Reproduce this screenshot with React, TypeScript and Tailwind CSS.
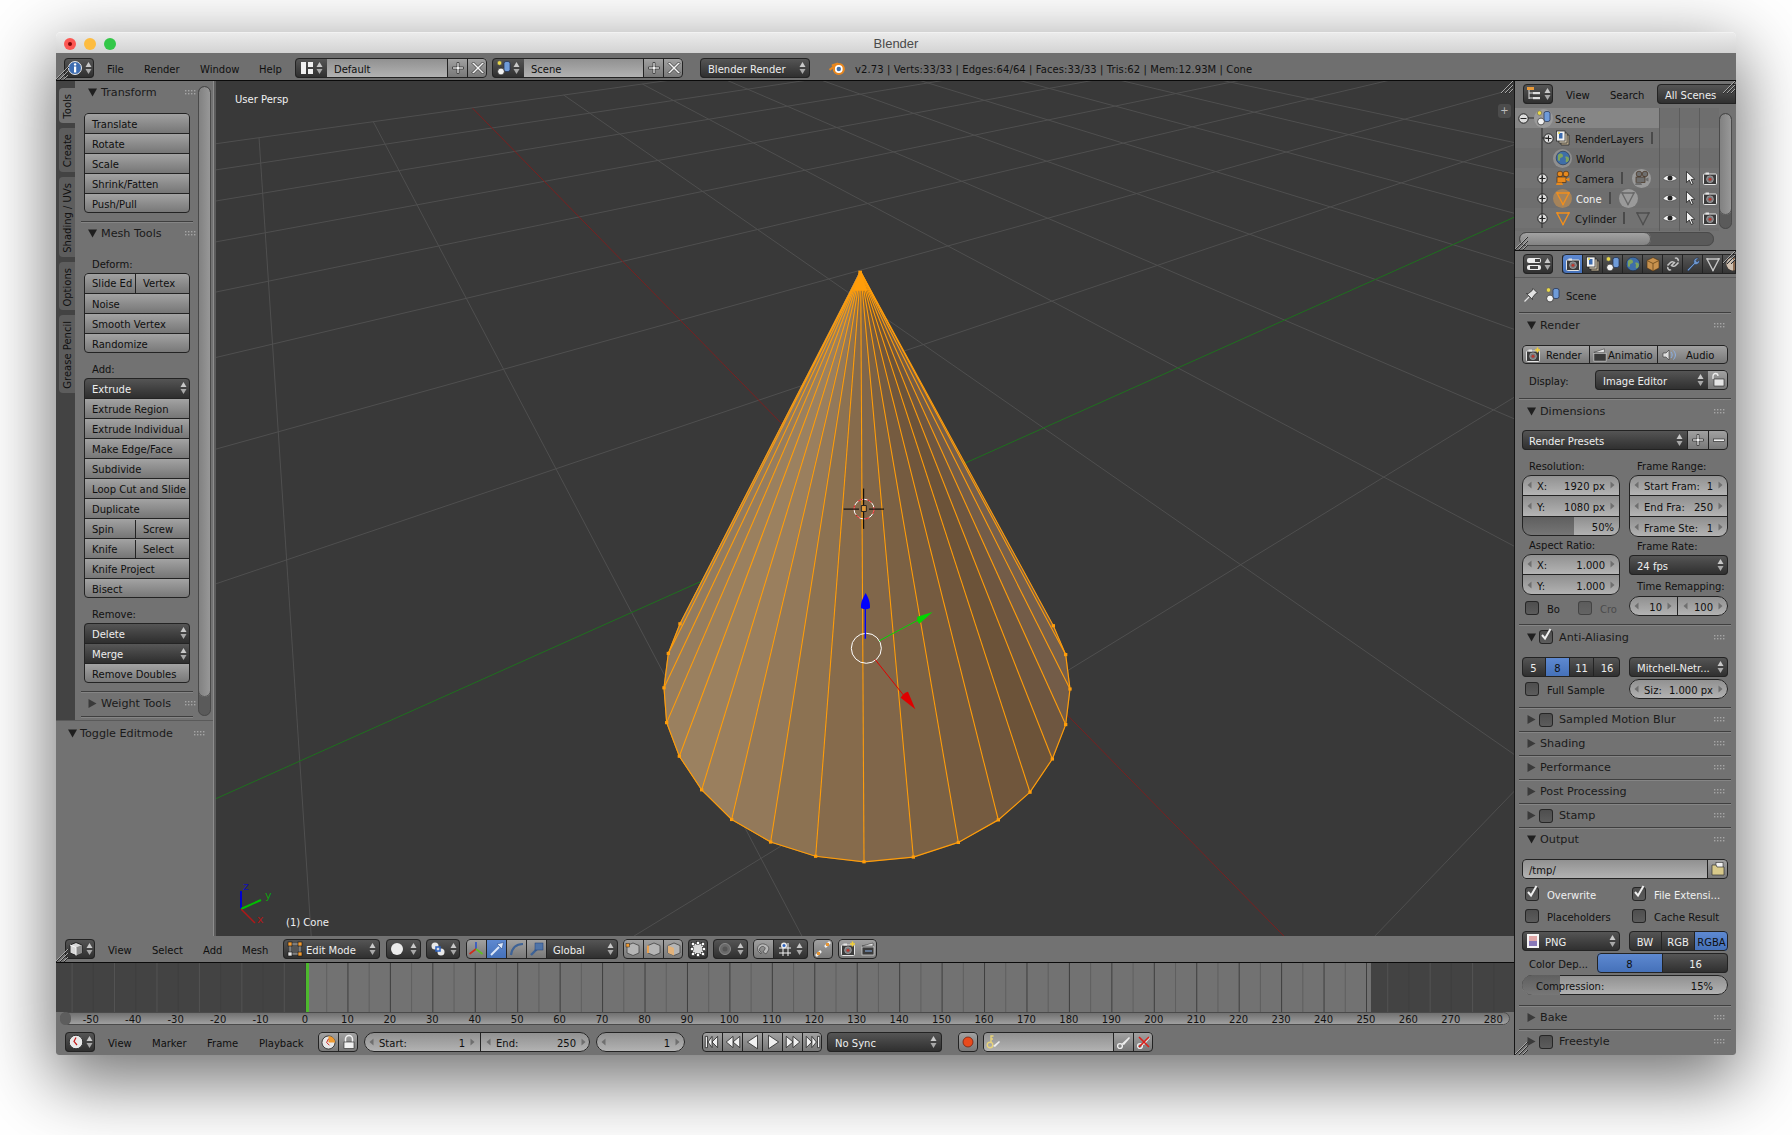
import type { ReactNode } from "react";

const light = "bg-linear-to-b from-[#a3a3a3] to-[#767676] text-[#0f0f0f]";
const dark = "bg-linear-to-b from-[#575757] to-[#2e2e2e] text-[#eeeeee]";
const num = "bg-linear-to-b from-[#8f8f8f] to-[#b4b4b4] text-[#0f0f0f]";
const blue = "bg-linear-to-b from-[#5f8ad2] to-[#4470b8] text-[#0f0f0f]";
const group = "flex overflow-hidden outline outline-[#232323] -outline-offset-1";

function Ic({ s = 16, children }: { s?: number; children: ReactNode }) {
  return (
    <svg width={s} height={s} viewBox="0 0 16 16" className="shrink-0">
      {children}
    </svg>
  );
}

function UpDown() {
  return (
    <svg width="7" height="14" viewBox="0 0 7 14" className="shrink-0">
      <path d="M3.5 1 6.5 6H.5Z" fill="#c9c9c9" />
      <path d="M3.5 13 .5 8h6Z" fill="#a9a9a9" />
    </svg>
  );
}

function Arrows() {
  return (
    <div className="ml-auto">
      <UpDown />
    </div>
  );
}

function Hatch({ className }: { className: string }) {
  return (
    <svg width="13" height="13" viewBox="0 0 13 13" className={className}>
      <path d="M0 13 13 0M4 13l9-9M8 13l5-5" stroke="#2c2c2c" fill="none" />
      <path d="M0 12 12 0M4 12l8-8M8 12l4-4" stroke="#a8a8a8" fill="none" />
    </svg>
  );
}

function Dots() {
  return (
    <div className="ml-auto">
      <svg width="11" height="7" viewBox="0 0 11 7" className="shrink-0">
        {[0, 3, 6, 9].map((x) =>
          [1, 4].map((y) => <rect key={`${x}${y}`} x={x} y={y} width="1.4" height="1.4" fill="#a5a5a5" />),
        )}
      </svg>
    </div>
  );
}

function Tri({ open }: { open?: boolean }) {
  return (
    <svg width="9" height="9" viewBox="0 0 9 9" className="shrink-0">
      <path d={open ? "M0 .5h9L4.5 8.5Z" : "M.5 0v9L8.5 4.5Z"} fill={open ? "#1f1f1f" : "#3a3a3a"} />
    </svg>
  );
}

function SceneIc() {
  return (
    <Ic>
      <circle cx="3.5" cy="3" r="2.2" fill="#e8d84a" stroke="#555" strokeWidth=".5" />
      <rect x="8" y="1.5" width="6" height="10" rx="2" fill="#6f9bd8" stroke="#1c2d50" strokeWidth=".7" />
      <circle cx="5" cy="11.5" r="3.4" fill="#f2f2f2" stroke="#222" strokeWidth=".7" />
    </Ic>
  );
}

function InfoIc() {
  return (
    <Ic>
      <circle cx="8" cy="8" r="6.5" fill="#3d6cb0" stroke="#e8e8e8" />
      <rect x="7" y="6.5" width="2.2" height="6" fill="#fff" />
      <circle cx="8.1" cy="4.4" r="1.2" fill="#fff" />
    </Ic>
  );
}

function CubeIc() {
  return (
    <Ic>
      <path d="M8 1.5 14 4v8l-6 2.5L2 12V4Z" fill="#d8d8d8" stroke="#222" />
      <path d="M8 6.5 14 4v8l-6 2.5Z" fill="#8a8a8a" />
      <path d="M2 4l6 2.5V14.5" stroke="#f5f5f5" fill="none" />
    </Ic>
  );
}

function ClockIc() {
  return (
    <Ic>
      <circle cx="8" cy="8" r="6.8" fill="#e9e9e9" stroke="#333" />
      <path d="M8 3.5 6 7.5l3 3.5" stroke="#c51a1a" fill="none" strokeWidth="1.2" />
    </Ic>
  );
}

function ConeIc({ c = "#f08f1e", s = 16 }: { c?: string; s?: number }) {
  return (
    <Ic s={s}>
      <path d="M2 3h12L8 14.5Z" fill="none" stroke={c} strokeWidth="1.4" />
      <circle cx="2.5" cy="3" r="1" fill={c} />
      <circle cx="13.5" cy="3" r="1" fill={c} />
      <circle cx="8" cy="14" r="1" fill={c} />
    </Ic>
  );
}

function OrangeCam({ c = "#e88a1e" }: { c?: string }) {
  return (
    <Ic>
      <circle cx="5" cy="4" r="2.8" fill={c} stroke="#3a2410" strokeWidth=".6" />
      <circle cx="11" cy="4" r="2.8" fill={c} stroke="#3a2410" strokeWidth=".6" />
      <rect x="2" y="7" width="9" height="5.5" fill={c} stroke="#3a2410" strokeWidth=".6" />
      <path d="M11 9l3.5-1.5v4L11 10Z" fill={c} />
      <path d="M2 12.5 1 15h7l-1-2.5" fill={c} />
    </Ic>
  );
}

function WorldIc() {
  return (
    <Ic>
      <circle cx="8" cy="8" r="6.8" fill="#3f6ea8" stroke="#20304a" strokeWidth=".6" />
      <path d="M3 5c3-3 5-1 5 1s-3 1-3 3-1 3-2 1ZM10 7c2-1 4 0 4 2s-2 4-3 3 1-3-1-5Z" fill="#7ea35c" />
    </Ic>
  );
}

function LayersIc() {
  return (
    <Ic>
      <path d="M6 5h8v10H6Z" fill="#b5a78b" stroke="#222" strokeWidth=".7" />
      <path d="M4 3h8v10H4Z" fill="#d8cdb5" stroke="#222" strokeWidth=".7" />
      <rect x="1.5" y="1" width="8.5" height="10" fill="#f3f3f3" stroke="#222" strokeWidth=".7" />
      <rect x="4" y="3" width="3.5" height="5.5" fill="#3d6cb0" />
      <circle cx="4" cy="3" r="1" fill="#e8d84a" />
    </Ic>
  );
}

function EyeIc() {
  return (
    <Ic>
      <path d="M1 8.5C4 4 12 4 15 8.5 12 12 4 12 1 8.5Z" fill="#f2f2f2" stroke="#333" strokeWidth=".6" />
      <circle cx="8" cy="8" r="2.5" fill="#222" />
    </Ic>
  );
}

function CursorIc() {
  return (
    <Ic>
      <path d="M4.5 1.5v11l2.8-2.5 2 4.5 1.8-.8-2-4.2 3.6-.3Z" fill="#f2f2f2" stroke="#222" strokeWidth=".8" />
    </Ic>
  );
}

function RenderCamIc({ star }: { star?: boolean }) {
  return (
    <Ic>
      <rect x="1.5" y="4" width="13" height="10.5" rx="1" fill="#3a3a3a" stroke="#e4e4e4" />
      <rect x="3.5" y="2.5" width="3.5" height="2" fill="#e4e4e4" />
      <circle cx="8" cy="9.2" r="3.4" fill="#77777a" stroke="#c8c8c8" strokeWidth=".5" />
      <circle cx="8" cy="9.2" r="1.5" fill="#b8382f" />
      {star && <path d="M12.5 .5v5M10 3h5" stroke="#f2cf38" strokeWidth="1.6" />}
    </Ic>
  );
}

function BlenderLogo() {
  return (
    <Ic>
      <path d="M.5 10 6 5.8 3 5.4l6-2" fill="none" stroke="#e8871e" strokeWidth="2" />
      <circle cx="9.8" cy="9" r="5" fill="#fff" stroke="#e8871e" strokeWidth="2.2" />
      <circle cx="9.8" cy="9" r="2.2" fill="#3f6ea8" />
    </Ic>
  );
}

function PlusIc() {
  return (
    <Ic>
      <path d="M7 2.5h2v4.5h4.5v2H9v4.5H7V9H2.5V7H7Z" fill="#f4f4f4" stroke="#222" strokeWidth=".7" />
    </Ic>
  );
}

function CrossIc() {
  return (
    <Ic>
      <path d="M3.5 2 8 6.5 12.5 2 14 3.5 9.5 8l4.5 4.5-1.5 1.5L8 9.5 3.5 14 2 12.5 6.5 8 2 3.5Z" fill="#f4f4f4" stroke="#222" strokeWidth=".7" />
    </Ic>
  );
}

function Chev({ left }: { left?: boolean }) {
  return (
    <svg width="5" height="8" viewBox="0 0 5 8" className="shrink-0">
      <path d={left ? "M4.5 .5v7L.5 4Z" : "M.5 .5v7L4.5 4Z"} fill="#6f6f6f" />
    </svg>
  );
}

function Menu({ w, children }: { w: string; children: string }) {
  return <span className={`${w} text-[#0f0f0f]`}>{children}</span>;
}

function Selector({ children, w = "w-[30px]" }: { children: ReactNode; w?: string }) {
  return (
    <div className={`${w} ${dark} flex h-[20px] shrink-0 items-center justify-center gap-[2px] rounded-[4px] outline outline-[#232323] -outline-offset-1`}>
      {children}
      <UpDown />
    </div>
  );
}

function Cell({ children, className = "" }: { children: ReactNode; className?: string }) {
  return (
    <div className={`flex h-[20px] shrink-0 items-center justify-center ${className}`}>
      {typeof children === "string" ? <span>{children}</span> : children}
    </div>
  );
}

function Row({ text, cls = light, chooser }: { text?: string; cls?: string; chooser?: boolean }) {
  return (
    <div className={`${cls} flex h-[20px] items-center border-t border-[#232323] pl-[8px] pr-[3px] first:border-t-0`}>
      <span className="whitespace-nowrap">{text}</span>
      {chooser && <Arrows />}
    </div>
  );
}

function Pair({ a, b }: { a: string; b: string }) {
  return (
    <div className={`${light} flex h-[20px] border-t border-[#232323] first:border-t-0`}>
      <span className="w-[52px] border-r border-[#232323] pl-[8px] leading-[19px]">{a}</span>
      <span className="flex-1 pl-[7px] leading-[19px]">{b}</span>
    </div>
  );
}

function Stack({ children }: { children: ReactNode }) {
  return <div className={`${group} w-[106px] flex-col rounded-[4px]`}>{children}</div>;
}

function Label({ children }: { children: string }) {
  return (
    <div className="flex h-[18px] items-center pb-[2px] pl-[8px] text-[#111]">
      <span>{children}</span>
    </div>
  );
}

function ToolHead({ open, label }: { open?: boolean; label: string }) {
  return (
    <div className="flex h-[24px] items-center pb-[1px] pl-[4px] pr-[2px]">
      <Tri open={open} />
      <span className="ml-[4px] text-[11.2px] text-[#1a1a1a]">{label}</span>
      <Dots />
    </div>
  );
}

function Sep({ className = "" }: { className?: string }) {
  return <div className={`h-px bg-[#3f3f3f] shadow-[0_1px_0_#858585] ${className}`} />;
}

function Tab({ h, on, children }: { h: string; on?: boolean; children: string }) {
  return (
    <div className={`${h} ${on ? "bg-[#727272]" : "bg-[#5d5d5d]"} ml-[3px] flex w-[16px] items-center justify-center rounded-l-[4px]`}>
      <span className="rotate-180 whitespace-nowrap text-[#111] [writing-mode:vertical-rl]">{children}</span>
    </div>
  );
}

function ToolShelf() {
  return (
    <div className="flex w-[157px] shrink-0 flex-col bg-[#727272]">
      <div className="flex h-[640px] border-b border-[#5a5a5a]">
        <div className="flex w-[19px] shrink-0 flex-col gap-[5px] bg-[#434343] pt-[7px]">
          <Tab h="h-[35px]" on>Tools</Tab>
          <Tab h="h-[44px]">Create</Tab>
          <Tab h="h-[80px]">Shading / UVs</Tab>
          <Tab h="h-[48px]">Options</Tab>
          <Tab h="h-[78px]">Grease Pencil</Tab>
        </div>
        <div className="w-[123px] shrink-0 pl-[9px]">
          <ToolHead open label="Transform" />
          <div className="mt-2">
            <Stack>
              <Row text="Translate" />
              <Row text="Rotate" />
              <Row text="Scale" />
              <Row text="Shrink/Fatten" />
              <Row text="Push/Pull" />
            </Stack>
          </div>
          <Sep className="mt-2 -ml-[3px] w-[112px]" />
          <ToolHead open label="Mesh Tools" />
          <div className="mt-[9px]">
            <Label>Deform:</Label>
          </div>
          <Stack>
            <Pair a="Slide Ed" b="Vertex" />
            <Row text="Noise" />
            <Row text="Smooth Vertex" />
            <Row text="Randomize" />
          </Stack>
          <div className="mt-[7px]">
            <Label>Add:</Label>
          </div>
          <Stack>
            <Row text="Extrude" cls={dark} chooser />
            <Row text="Extrude Region" />
            <Row text="Extrude Individual" />
            <Row text="Make Edge/Face" />
            <Row text="Subdivide" />
            <Row text="Loop Cut and Slide" />
            <Row text="Duplicate" />
            <Pair a="Spin" b="Screw" />
            <Pair a="Knife" b="Select" />
            <Row text="Knife Project" />
            <Row text="Bisect" />
          </Stack>
          <div className="mt-[7px]">
            <Label>Remove:</Label>
          </div>
          <Stack>
            <Row text="Delete" cls={dark} chooser />
            <Row text="Merge" cls={dark} chooser />
            <Row text="Remove Doubles" />
          </Stack>
          <Sep className="mt-2 -ml-[3px] w-[112px]" />
          <ToolHead label="Weight Tools" />
          <Sep className="-ml-[3px] w-[112px]" />
        </div>
        <div className="mt-[5px] h-[630px] w-[13px] shrink-0 rounded-full bg-[#5a5a5a] outline outline-[#4a4a4a] -outline-offset-1">
          <div className="h-[611px] rounded-full bg-linear-to-r from-[#7f7f7f] to-[#9a9a9a] outline outline-[#555] -outline-offset-1" />
        </div>
      </div>
      <div className="flex h-[24px] items-center pl-[12px] pr-[8px] pt-[1px]">
        <Tri open />
        <span className="ml-[3px] text-[11.2px] text-[#1a1a1a]">Toggle Editmode</span>
        <Dots />
      </div>
    </div>
  );
}

const VA: [number, number] = [2682, -455];
const VB: [number, number] = [31, -384];
const gridA = [
  [0, 115], [0, 163], [0, 220], [0, 295], [0, 387], [0, 507], [0, 675], [0, 922], [505, 1568], [1400, 1568],
];
const gridB = [52, 190, 420, 515, 600, 680, 755, 825, 890, 950];

function farB(x: number): [number, number] {
  const y = 115 - 0.2126 * x;
  return [x + (x - VB[0]) * 6, y + (y - VB[1]) * 6];
}

const base = [
  [120, 920], [85, 995], [72, 1082], [80, 1170], [118, 1255], [185, 1340], [275, 1415], [392, 1472], [527, 1508], [672, 1522],
  [820, 1510], [955, 1473], [1075, 1416], [1170, 1346], [1237, 1262], [1277, 1175], [1290, 1085], [1277, 998], [1240, 925],
];
const faces = [
  "#917a5e", "#927b5f", "#967d5e", "#9a805f", "#9b8160", "#9a7f5e", "#93795a", "#8c7252", "#866b4c",
  "#80664a", "#7b6144", "#755b40", "#70563c", "#6c5339", "#6e5640", "#735c48", "#755f4c", "#765f4e",
];
const ns = "non-scaling-stroke";

function Scene3D() {
  return (
    <svg viewBox="216 81 1298 855" className="block h-full w-full">
      <g transform="translate(216 81) scale(0.8278 0.5453)" fill="none" strokeWidth="1">
        {gridA.map(([x, y]) => (
          <line key={`a${y}${x}`} x1={x} y1={y} x2={VA[0]} y2={VA[1]} stroke="#4f4f4f" vectorEffect={ns} />
        ))}
        {gridB.map((x) => {
          const [fx, fy] = farB(x);
          return <line key={`b${x}`} x1={x} y1={115 - 0.2126 * x} x2={fx} y2={fy} stroke="#4f4f4f" vectorEffect={ns} />;
        })}
        <line x1="0" y1="1316" x2="1568" y2="250" stroke="#1e701e" vectorEffect={ns} />
        <line x1="310" y1="50" x2="1290" y2="1568" stroke="#7a2020" vectorEffect={ns} />
      </g>
      <g transform="translate(640 260) scale(0.33333 0.3954)">
        {faces.map((c, i) => (
          <polygon key={c + i} points={`660,30 ${base[i][0]},${base[i][1]} ${base[i + 1][0]},${base[i + 1][1]}`} fill={c} stroke={c} vectorEffect={ns} />
        ))}
        {base.map(([x, y]) => (
          <line key={`s${x}`} x1="662" y1="30" x2={x} y2={y} stroke="#ff9d0a" strokeWidth="1.1" vectorEffect={ns} />
        ))}
        <polyline points={base.map((p) => p.join(",")).join(" ")} fill="none" stroke="#ff9d0a" strokeWidth="1.2" vectorEffect={ns} />
        <path d="M660 28 640 78h42Z" fill="#ff9d0a" />
        {base.map(([x, y]) => (
          <rect key={`v${x}`} x={x - 5} y={y - 4} width="10" height="8" fill="#ff9d0a" />
        ))}
        <rect x="655" y="27" width="11" height="12" fill="#ff9d0a" />
        <ellipse cx="672" cy="630" rx="30" ry="25" fill="none" stroke="#fff" vectorEffect={ns} />
        <ellipse cx="672" cy="630" rx="30" ry="25" fill="none" stroke="#e01010" strokeDasharray="5 5" vectorEffect={ns} />
        <path d="M611 630h46M687 630h45M671 578v46M671 636v44" stroke="#000" fill="none" vectorEffect={ns} />
        <rect x="664" y="621" width="15" height="15" fill="#e09a3a" stroke="#222" vectorEffect={ns} />
        <ellipse cx="679" cy="982" rx="45" ry="38" fill="none" stroke="#fff" vectorEffect={ns} />
        <line x1="676" y1="958" x2="676" y2="880" stroke="#0000ff" strokeWidth="1.3" vectorEffect={ns} />
        <path d="M677 842c8 12 14 22 13 38-8 4-18 4-27 0-1-16 6-26 14-38Z" fill="#0000ff" />
        <line x1="718" y1="963" x2="840" y2="908" stroke="#00d800" vectorEffect={ns} />
        <path d="M878 890 832 902c-2 8 0 13 6 18Z" fill="#00d800" />
        <line x1="705" y1="1010" x2="790" y2="1100" stroke="#e00000" vectorEffect={ns} />
        <path d="M826 1136 804 1092c-10 2-17 8-22 15Z" fill="#e00000" />
      </g>
      <path d="M241 909V891" stroke="#0000d0" strokeWidth="2" />
      <path d="M241 909 261 900" stroke="#00c000" strokeWidth="2" />
      <path d="M241 909 255 923" stroke="#b01818" strokeWidth="1.5" />
      <text x="243" y="890" fontSize="11" fill="#1010b0">z</text>
      <text x="265" y="899" fontSize="11" fill="#10a010">y</text>
      <text x="257" y="923" fontSize="11" fill="#b01818">x</text>
    </svg>
  );
}

function SelectModeIc({ i }: { i: number }) {
  return (
    <Ic>
      <path d="M8 2 14 4.5v7.5L8 14.5 2 12V4.5Z" fill="#b5b5b5" stroke="#444" strokeWidth=".8" />
      {i === 0 && <rect x="1" y="2.5" width="3.5" height="3.5" fill="#f09a32" stroke="#222" strokeWidth=".5" />}
      {i === 1 && <path d="M2 4.5V12" stroke="#e8a050" strokeWidth="2" />}
      {i === 2 && <path d="M2 4.5 8 7v7.5L2 12Z" fill="#e2b27a" />}
    </Ic>
  );
}

function ViewHeader() {
  return (
    <div className="relative flex h-[27px] shrink-0 items-center border-b border-[#0a0a0a] bg-[#727272] pl-[9px]">
      <Selector>
        <CubeIc />
      </Selector>
      <div className="ml-[13px] flex">
        <Menu w="w-[44px]">View</Menu>
        <Menu w="w-[51px]">Select</Menu>
        <Menu w="w-[39px]">Add</Menu>
        <Menu w="w-[41px]">Mesh</Menu>
      </div>
      <div className={`${dark} flex h-[20px] w-[97px] shrink-0 items-center gap-[3px] rounded-[4px] pl-[4px] pr-[4px] outline outline-[#232323] -outline-offset-1`}>
        <Ic>
          <path d="M3 3h10v10H3Z" fill="#555" stroke="#aaa" />
          <rect x="1" y="1" width="4" height="4" fill="#f09a32" stroke="#111" strokeWidth=".6" />
          <rect x="11" y="1" width="4" height="4" fill="#f09a32" stroke="#111" strokeWidth=".6" />
          <rect x="11" y="11" width="4" height="4" fill="#f09a32" stroke="#111" strokeWidth=".6" />
          <rect x="1" y="11" width="4" height="4" fill="#e8e8e8" stroke="#111" strokeWidth=".6" />
        </Ic>
        <span>Edit Mode</span>
        <Arrows />
      </div>
      <div className="ml-[6px]">
        <Selector w="w-[35px]">
          <svg width="14" height="14" viewBox="0 0 14 14" className="mr-[4px]">
            <circle cx="7" cy="7" r="6" fill="#ececec" />
          </svg>
        </Selector>
      </div>
      <div className="ml-[5px]">
        <Selector w="w-[34px]">
          <svg width="16" height="16" viewBox="0 0 16 16" className="mr-[2px]">
            <circle cx="5" cy="5" r="3.5" fill="#e8e8e8" />
            <circle cx="11" cy="11" r="3.5" fill="#e8e8e8" />
            <rect x="6" y="6" width="4" height="4" fill="#ddd" stroke="#2c62c0" strokeWidth="1.5" />
          </svg>
        </Selector>
      </div>
      <div className={`${group} ml-[6px] h-[20px] w-[152px] shrink-0 rounded-[4px]`}>
        <Cell className={`w-[20px] ${light}`}>
          <svg width="16" height="16" viewBox="0 0 16 16">
            <path d="M8 8V1" stroke="#2b53c8" strokeWidth="1.6" />
            <path d="M8 8 1.5 13" stroke="#d02a1a" strokeWidth="1.6" />
            <path d="M8 8l6.5 5" stroke="#5ec01e" strokeWidth="1.6" />
          </svg>
        </Cell>
        <Cell className={`w-[20px] border-l border-[#232323] ${blue}`}>
          <svg width="16" height="16" viewBox="0 0 16 16">
            <path d="M2 14 10 6" stroke="#dce8fa" strokeWidth="2" />
            <path d="M14.5 1.5 8 3l5 5Z" fill="#dce8fa" stroke="#1f3f7a" strokeWidth=".5" />
          </svg>
        </Cell>
        <Cell className={`w-[20px] border-l border-[#232323] ${light}`}>
          <svg width="16" height="16" viewBox="0 0 16 16">
            <path d="M2 14C3 7 7 3 14 3" fill="none" stroke="#3d6296" strokeWidth="2.2" />
          </svg>
        </Cell>
        <Cell className={`w-[20px] border-l border-[#232323] ${light}`}>
          <svg width="16" height="16" viewBox="0 0 16 16">
            <path d="M2 14 8 8" stroke="#3d6296" strokeWidth="2.4" />
            <rect x="6" y="2" width="8" height="7" fill="#4f74a8" stroke="#1f3f7a" strokeWidth=".5" />
          </svg>
        </Cell>
        <div className={`${dark} flex flex-1 items-center border-l border-[#232323] pl-[6px] pr-[4px]`}>
          <span>Global</span>
          <Arrows />
        </div>
      </div>
      <div className={`${group} ml-[5px] h-[20px] shrink-0 rounded-[4px]`}>
        <Cell className={`w-[20px] ${light}`}>
          <SelectModeIc i={0} />
        </Cell>
        <Cell className={`w-[20px] border-l border-[#232323] ${light}`}>
          <SelectModeIc i={1} />
        </Cell>
        <Cell className={`w-[20px] border-l border-[#232323] ${light}`}>
          <SelectModeIc i={2} />
        </Cell>
      </div>
      <div className={`${group} ml-[5px] h-[20px] w-[20px] shrink-0 justify-center rounded-[4px] ${dark}`}>
        <svg width="16" height="20" viewBox="0 0 16 16">
          <rect x="3" y="3" width="10" height="10" fill="#d8d8d8" />
          {[[3, 3], [13, 3], [3, 13], [13, 13], [8, 2], [8, 14], [2, 8], [14, 8]].map(([x, y]) => (
            <rect key={`${x}${y}`} x={x - 1.5} y={y - 1.5} width="3" height="3" fill="#fff" stroke="#111" strokeWidth=".5" />
          ))}
        </svg>
      </div>
      <div className="ml-[5px]">
        <Selector w="w-[35px]">
          <svg width="14" height="14" viewBox="0 0 14 14" className="mr-[3px]">
            <circle cx="7" cy="7" r="5.5" fill="#6a6a6a" stroke="#8a8a8a" />
            <circle cx="7" cy="7" r="2.5" fill="#555" />
          </svg>
        </Selector>
      </div>
      <div className={`${group} ml-[5px] h-[20px] w-[55px] shrink-0 rounded-[4px]`}>
        <Cell className={`w-[20px] ${light}`}>
          <svg width="16" height="16" viewBox="0 0 16 16">
            <path d="M3 10c-2-4 2-8 6-7s6 4 4 7l-2 3-3-2 2-3c1-2-3-4-5-1l-1 2 2 2 0 2Z" fill="#b8b8b8" stroke="#444" strokeWidth=".7" />
          </svg>
        </Cell>
        <div className={`${dark} flex flex-1 items-center gap-[3px] border-l border-[#232323] pl-[3px]`}>
          <svg width="16" height="16" viewBox="0 0 16 16">
            <path d="M2 7h12M2 12h12M6 2v13M11 2v13" stroke="#f2f2f2" />
            <circle cx="7" cy="4.5" r="3" fill="#e8e8e8" />
            <circle cx="7" cy="4.5" r="1.5" fill="#2c62c0" />
          </svg>
          <UpDown />
        </div>
      </div>
      <div className={`${group} ml-[5px] h-[20px] w-[20px] shrink-0 items-center justify-center rounded-[4px] ${light}`}>
        <svg width="16" height="16" viewBox="0 0 16 16">
          <path d="M1 15 6 10M15 1l-5 5" stroke="#f2f2f2" strokeWidth="2.5" />
          <rect x="2" y="11" width="3" height="3" fill="#e69635" />
          <rect x="11" y="2" width="3" height="3" fill="#e69635" />
        </svg>
      </div>
      <div className={`${group} ml-[5px] h-[20px] w-[39px] shrink-0 rounded-[4px]`}>
        <Cell className={`w-[20px] ${light}`}>
          <RenderCamIc star />
        </Cell>
        <Cell className={`w-[19px] ${light}`}>
          <svg width="16" height="16" viewBox="0 0 16 16">
            <rect x="2" y="6" width="12" height="8" fill="#3a3a3a" stroke="#ddd" strokeWidth=".7" />
            <path d="M2 5 13 2v3H2Z" fill="#e8e8e8" stroke="#222" strokeWidth=".5" />
            <path d="M5 10h7" stroke="#8cb2e8" />
          </svg>
        </Cell>
      </div>
      <Hatch className="absolute bottom-0 left-0" />
    </div>
  );
}

const frames = Array.from({ length: 68 }, (_, i) => i * 5 - 55);
const labels = Array.from({ length: 34 }, (_, i) => (i - 5) * 10);

function Timeline() {
  return (
    <div className="relative flex h-[49px] shrink-0 bg-[#727272]">
      <div className="h-full w-[250px] bg-[#434343]" />
      <div className="flex-1" />
      <div className="h-full w-[143px] bg-[#434343]" />
      <svg viewBox="0 0 1458 49" className="absolute left-0 top-0 h-[49px] w-[1458px]">
        {frames.map((f) => (
          <line
            key={f}
            x1={249.5 + f * 4.244}
            x2={249.5 + f * 4.244}
            y1="0"
            y2="49"
            stroke={f % 10 === 0 ? "#3e3e3e" : "#5f5f5f"}
            opacity={f < 0 || f > 250 ? 0.6 : 1}
          />
        ))}
        <rect x="250" y="0" width="3" height="49" fill="#4db82e" />
      </svg>
    </div>
  );
}

function Scrubber() {
  return (
    <div className="relative h-[13px] shrink-0 bg-[#727272]">
      <div className="mx-[4px] flex h-[13px] items-center overflow-hidden rounded-full bg-linear-to-b from-[#6d6d6d] to-[#a4a4a4] pl-[11.6px] outline outline-[#4a4a4a] -outline-offset-1">
        {labels.map((l) => (
          <span key={l} className={`${l < 0 ? "pr-[4px]" : ""} w-[42.44px] shrink-0 text-center leading-[13px] text-[#111]`}>
            {l}
          </span>
        ))}
      </div>
      <div className="absolute left-[4px] top-0 h-[13px] w-[11px] rounded-full bg-[#5d5d5d]" />
    </div>
  );
}

function NumPill({ label, value, w }: { label?: string; value: string; w: string }) {
  return (
    <div className={`${num} ${w} flex h-[20px] shrink-0 items-center gap-[5px] px-[5px]`}>
      <Chev left />
      {label && <span className="whitespace-nowrap">{label}</span>}
      <span className="ml-auto whitespace-nowrap">{value}</span>
      <Chev />
    </div>
  );
}

function Transport({ d }: { d: string }) {
  return (
    <Cell className={`w-[20px] border-l border-[#232323] first:border-l-0 ${light}`}>
      <svg width="18" height="18" viewBox="0 0 16 16">
        <path d={d} fill="#f0f0f0" stroke="#222" strokeWidth=".7" />
      </svg>
    </Cell>
  );
}

function TimeHeader() {
  return (
    <div className="flex h-[30px] shrink-0 items-start bg-[#727272] pl-[9px] pt-[7px]">
      <Selector>
        <ClockIc />
      </Selector>
      <div className="ml-[13px] flex h-[20px] items-center">
        <Menu w="w-[44px]">View</Menu>
        <Menu w="w-[55px]">Marker</Menu>
        <Menu w="w-[52px]">Frame</Menu>
        <Menu w="w-[59px]">Playback</Menu>
      </div>
      <div className={`${group} h-[20px] w-[40px] shrink-0 rounded-[4px]`}>
        <Cell className={`w-[20px] ${light}`}>
          <svg width="15" height="15" viewBox="0 0 16 16">
            <circle cx="8" cy="8" r="7" fill="#e8e8e8" stroke="#333" />
            <path d="M8 8V1a7 7 0 0 1 7 7Z" fill="#ee9a30" />
            <path d="M8 4 6 8l3 3" stroke="#c51a1a" fill="none" />
          </svg>
        </Cell>
        <Cell className={`w-[20px] border-l border-[#232323] ${light}`}>
          <svg width="16" height="16" viewBox="0 0 16 16">
            <path d="M4.5 8V5a3.5 3.5 0 0 1 7 0v3" fill="none" stroke="#f2f2f2" strokeWidth="1.5" />
            <rect x="3" y="8" width="10" height="6.5" fill="#f2f2f2" stroke="#222" strokeWidth=".6" />
          </svg>
        </Cell>
      </div>
      <div className={`${group} ml-[6px] h-[20px] w-[226px] shrink-0 rounded-full`}>
        <NumPill label="Start:" value="1" w="w-[116px]" />
        <div className="border-l border-[#232323]">
          <NumPill label="End:" value="250" w="w-[110px]" />
        </div>
      </div>
      <div className={`${group} ml-[6px] h-[20px] w-[89px] shrink-0 rounded-full`}>
        <NumPill value="1" w="w-[89px]" />
      </div>
      <div className={`${group} ml-[17px] h-[20px] w-[120px] shrink-0 rounded-[4px]`}>
        <Transport d="M2 3h2v10H2ZM13 3v10L8 8v5L4.5 8 8 3v5Z" />
        <Transport d="M8 3v5l6-5v10L8 8v5L2 8Z" />
        <Transport d="M12 2v12L3 8Z" />
        <Transport d="M4 2v12l9-6Z" />
        <Transport d="M2 3v10l6-5v5l6-5-6-5v5Z" />
        <Transport d="M14 3h-2v10h2ZM2 3v10l5-5v5l4-5-4-5v5Z" />
      </div>
      <div className={`${dark} ml-[5px] flex h-[20px] w-[115px] shrink-0 items-center rounded-[4px] pl-[8px] pr-[5px] outline outline-[#232323] -outline-offset-1`}>
        <span>No Sync</span>
        <Arrows />
      </div>
      <div className={`${group} ml-[16px] h-[20px] w-[20px] shrink-0 items-center justify-center rounded-[4px] ${light}`}>
        <svg width="12" height="12" viewBox="0 0 12 12">
          <circle cx="6" cy="6" r="5" fill="#e84a1c" stroke="#6a1a0a" strokeWidth=".7" />
        </svg>
      </div>
      <div className={`${group} ml-[5px] h-[20px] w-[170px] shrink-0 rounded-[4px]`}>
        <div className={`${num} flex h-[20px] w-[130px] items-center pl-[3px]`}>
          <svg width="16" height="16" viewBox="0 0 16 16">
            <circle cx="4" cy="11" r="2.8" fill="none" stroke="#e8d37a" strokeWidth="1.4" />
            <path d="M5 9V2h2.5M5 5h2" stroke="#e8d37a" strokeWidth="1.4" fill="none" />
            <path d="M7 12l6-5 1 1-5 5" fill="#eee" />
          </svg>
        </div>
        <Cell className={`w-[20px] border-l border-[#232323] ${light}`}>
          <svg width="16" height="16" viewBox="0 0 16 16">
            <circle cx="4" cy="12" r="2.4" fill="none" stroke="#eee" strokeWidth="1.4" />
            <path d="M5.5 10 13 3l1 1-6 7" fill="#eee" />
          </svg>
        </Cell>
        <Cell className={`w-[20px] border-l border-[#232323] ${light}`}>
          <svg width="16" height="16" viewBox="0 0 16 16">
            <circle cx="4" cy="12" r="2.4" fill="none" stroke="#eee" strokeWidth="1.4" />
            <path d="M5.5 10 13 3l1 1-6 7" fill="#eee" />
            <path d="M3 3l10 10M13 3 3 13" stroke="#d8201a" strokeWidth="1.6" />
          </svg>
        </Cell>
      </div>
    </div>
  );
}

function ColIcons({ show }: { show?: boolean }) {
  return (
    <div className="flex h-full">
      <div className="flex w-[20px] items-center justify-center border-l border-[#5c5c5c]">{show && <EyeIc />}</div>
      <div className="flex w-[20px] items-center justify-center border-l border-[#5c5c5c]">{show && <CursorIc />}</div>
      <div className="flex w-[20px] items-center justify-center border-l border-[#5c5c5c]">{show && <RenderCamIc />}</div>
    </div>
  );
}

function Expand({ minus }: { minus?: boolean }) {
  return (
    <svg width="11" height="11" viewBox="0 0 11 11" className="shrink-0">
      <circle cx="5.5" cy="5.5" r="4.7" fill="#dcdcdc" stroke="#222" />
      <path d={minus ? "M2.5 5.5h6" : "M2.5 5.5h6M5.5 2.5v6"} stroke="#222" />
    </svg>
  );
}

function OutRow({ pad, plus, icon, label, tail, cols, cls, mark, tc = "text-[#111]" }: {
  pad: string;
  plus?: boolean;
  icon?: ReactNode;
  label: string;
  tail?: ReactNode;
  cols?: boolean;
  cls: string;
  mark?: boolean;
  tc?: string;
}) {
  return (
    <div className={`flex h-[20px] shrink-0 ${cls}`}>
      <div className={`flex w-[144px] shrink-0 items-center ${pad}`}>
        {plus && <Expand />}
        {icon}
        <span className={`ml-[4px] ${tc}`}>{label}</span>
        {mark && <div className="ml-[7px] h-[12px] w-[2px] bg-[#4a4a4a]" />}
        {tail}
      </div>
      <ColIcons show={cols} />
    </div>
  );
}

function Halo({ c, children }: { c: string; children: ReactNode }) {
  return <div className={`${c} flex h-[19px] w-[19px] shrink-0 items-center justify-center rounded-full`}>{children}</div>;
}

function Outliner() {
  return (
    <div className="relative h-[170px] shrink-0 border-b border-[#111] bg-[#727272]">
      <div className="flex h-[27px] items-center pb-[1px] pl-[8px]">
        <Selector>
          <svg width="16" height="16" viewBox="0 0 16 16">
            <path d="M3 3v10M3 7h4M3 12h4" stroke="#ddd" />
            <rect x="1" y="1" width="7" height="3" fill="#e89a3a" />
            <rect x="7" y="6" width="7" height="2.2" fill="#ddd" />
            <rect x="7" y="11" width="7" height="2.2" fill="#ddd" />
          </svg>
        </Selector>
        <div className="ml-[13px] flex">
          <Menu w="w-[44px]">View</Menu>
          <Menu w="w-[47px]">Search</Menu>
        </div>
        <div className={`${dark} flex h-[20px] flex-1 items-center rounded-l-[4px] pl-[8px] outline outline-[#232323] -outline-offset-1`}>
          <span>All Scenes</span>
        </div>
      </div>
      <div className="flex h-[123px] overflow-hidden">
        <div className="flex w-[204px] shrink-0 flex-col">
          <div className="flex h-[20px] shrink-0 bg-[#6e6e6e]">
            <div className="flex w-[144px] shrink-0 items-center bg-[#868686] pl-[3px]">
              <Expand minus />
              <div className="ml-[5px]">
                <Halo c="bg-[#9a9a9a]">
                  <SceneIc />
                </Halo>
              </div>
              <span className="ml-[2px] text-[#111]">Scene</span>
            </div>
            <ColIcons />
          </div>
          <OutRow cls="bg-[#727272]" pad="pl-[28px]" plus icon={<div className="ml-[1px]"><LayersIc /></div>} label="RenderLayers" mark />
          <OutRow cls="bg-[#6e6e6e]" pad="pl-[38px]" icon={<Halo c="bg-[#8f8f8f]"><WorldIc /></Halo>} label="World" />
          <OutRow
            cls="bg-[#727272]"
            pad="pl-[22px]"
            plus
            icon={<div className="ml-[7px]"><OrangeCam /></div>}
            label="Camera"
            mark
            tail={<div className="ml-[9px]"><Halo c="bg-[#9a9a9a]"><OrangeCam c="#6e6e6e" /></Halo></div>}
            cols
          />
          <OutRow
            cls="bg-[#6e6e6e]"
            pad="pl-[22px]"
            plus
            icon={<div className="ml-[5px]"><Halo c="bg-[#a5835a]"><ConeIc /></Halo></div>}
            label="Cone"
            tc="text-[#f2f2f2]"
            mark
            tail={<div className="ml-[8px]"><Halo c="bg-[#9a9a9a]"><ConeIc c="#6a6a6a" /></Halo></div>}
            cols
          />
          <OutRow
            cls="bg-[#727272]"
            pad="pl-[22px]"
            plus
            icon={<div className="ml-[7px]"><ConeIc /></div>}
            label="Cylinder"
            mark
            tail={<div className="ml-[10px]"><ConeIc c="#4f4f4f" /></div>}
            cols
          />
          <OutRow cls="bg-[#6e6e6e]" pad="pl-[40px]" label="" cols />
        </div>
        <div className="mt-[5px] h-[116px] w-[13px] shrink-0 rounded-full bg-[#5a5a5a] outline outline-[#4a4a4a] -outline-offset-1">
          <div className="h-[102px] rounded-full bg-linear-to-r from-[#7f7f7f] to-[#9a9a9a] outline outline-[#555] -outline-offset-1" />
        </div>
      </div>
      <div className="ml-[4px] mt-px h-[14px] w-[195px] rounded-full bg-[#5a5a5a] outline outline-[#4a4a4a] -outline-offset-1">
        <div className="h-[14px] w-[132px] rounded-full bg-linear-to-b from-[#a5a5a5] to-[#808080] outline outline-[#555] -outline-offset-1" />
      </div>
      <svg width="218" height="120" viewBox="0 0 218 120" className="pointer-events-none absolute left-0 top-[27px]">
        <path d="M27 20V124M13 10h6M27 70h-1M27 90h-1M27 110h-1M27 30h6" stroke="#2c2c2c" fill="none" />
      </svg>
      <Hatch className="absolute right-0 top-0" />
      <Hatch className="absolute bottom-0 left-0" />
    </div>
  );
}

function PropTab({ on, children }: { on?: boolean; children: ReactNode }) {
  return (
    <Cell className={`w-[20px] border-l border-[#232323] ${on ? "bg-linear-to-b from-[#5f8ad2] to-[#4470b8]" : "bg-linear-to-b from-[#5a5a5a] to-[#333333]"}`}>
      {children}
    </Cell>
  );
}

function PHead({ open, check, checked, label }: { open?: boolean; check?: boolean; checked?: boolean; label: string }) {
  return (
    <div className={`flex ${open ? "h-[24px]" : "h-[23px]"} items-center pl-[5px] pr-[3px]`}>
      <Tri open={open} />
      {check && (
        <div className="ml-[3px]">
          <Check on={checked} />
        </div>
      )}
      <span className={`${check ? "ml-[6px]" : "ml-[4px]"} text-[11.2px] text-[#1a1a1a]`}>{label}</span>
      <Dots />
    </div>
  );
}

function Check({ on, dim }: { on?: boolean; dim?: boolean }) {
  return (
    <div className={`${dim ? "opacity-60" : ""} relative h-[14px] w-[14px] shrink-0 rounded-[3px] bg-linear-to-b from-[#4d4d4d] to-[#5d5d5d] outline outline-[#262626] -outline-offset-1`}>
      {on && (
        <svg width="14" height="16" viewBox="0 0 14 16" className="absolute left-0 top-[-3px]">
          <path d="M3 8l3 3.5L11.5 2" fill="none" stroke="#f0f0f0" strokeWidth="2" />
        </svg>
      )}
    </div>
  );
}

function CheckLabel({ on, label, dim, w, light: lt }: { on?: boolean; label: string; dim?: boolean; w: string; light?: boolean }) {
  return (
    <div className={`${w} flex h-[20px] shrink-0 items-center pl-[3px]`}>
      <Check on={on} dim={dim} />
      <span className={`ml-[8px] whitespace-nowrap ${dim ? "text-[#4c4c4c]" : lt ? "text-[#f0f0f0]" : "text-[#111]"}`}>{label}</span>
    </div>
  );
}

function PLabel({ children, right }: { children: string; right?: boolean }) {
  return (
    <div className={`flex h-[18px] items-center whitespace-nowrap pb-[1px] text-[#111] ${right ? "pl-[8px]" : "pl-[7px]"}`}>
      <span>{children}</span>
    </div>
  );
}

function PSep() {
  return <Sep className="-ml-[3px] w-[212px]" />;
}

function NumCol({ rows }: { rows: [string, string][] }) {
  return (
    <>
      {rows.map(([l, v], i) => (
        <div key={l + v} className={i > 0 ? "border-t border-[#232323]" : ""}>
          <NumPill label={l} value={v} w="w-full" />
        </div>
      ))}
    </>
  );
}

function Properties() {
  return (
    <div className="relative flex-1 bg-[#727272]">
      <div className="flex h-[27px] items-center border-b border-[#5a5a5a] pl-[8px]">
        <Selector>
          <svg width="16" height="14" viewBox="0 0 16 14">
            <rect x="1" y="1" width="14" height="5" rx="2" fill="#eee" />
            <rect x="1" y="8" width="14" height="5" rx="2" fill="#eee" />
            <rect x="9" y="2" width="5" height="3" fill="#444" />
            <rect x="4" y="9" width="8" height="3" fill="#444" />
          </svg>
        </Selector>
        <div className={`${group} ml-[9px] h-[20px] flex-1 rounded-l-[4px]`}>
          <PropTab on>
            <RenderCamIc />
          </PropTab>
          <PropTab>
            <LayersIc />
          </PropTab>
          <PropTab>
            <SceneIc />
          </PropTab>
          <PropTab>
            <WorldIc />
          </PropTab>
          <PropTab>
            <Ic>
              <path d="M8 1.5 14 4.5v7.5L8 15l-6-3V4.5Z" fill="#c8924e" stroke="#4a3010" strokeWidth=".6" />
              <path d="M2 4.5 8 7.5l6-3M8 7.5V15" stroke="#7a5524" fill="none" />
            </Ic>
          </PropTab>
          <PropTab>
            <Ic>
              <path d="M6 10 10 6M2.5 9.5l3-3c1-1 3-1 3 0M13.5 6.5l-3 3c-1 1-3 1-3 0M6 13.5c-1.5 1.5-4 -1-3-2.5M10 2.5c1.5-1.5 4 1 3 2.5" fill="none" stroke="#c5c5c5" strokeWidth="1.6" />
            </Ic>
          </PropTab>
          <PropTab>
            <Ic>
              <path d="M2 14 9 7c-1-3 1-5.5 4.5-5L11 4.5 12 6l2.5-2c.5 3-2 5-5 4.5l-6 6.5Z" fill="#6d97cf" stroke="#1f2f4a" strokeWidth=".5" />
            </Ic>
          </PropTab>
          <PropTab>
            <ConeIc c="#c5c5c5" />
          </PropTab>
          <PropTab>
            <Ic>
              <circle cx="8" cy="8" r="6.5" fill="#8a6a50" />
              <path d="M8 1.5a6.5 6.5 0 0 0 0 13Z" fill="#cfc0b0" />
            </Ic>
          </PropTab>
        </div>
      </div>
      <div className="flex flex-col pl-[7px] pr-[8px]">
        <div className="flex h-[34px] items-center gap-[5px] pl-px">
          <svg width="16" height="16" viewBox="0 0 16 16">
            <path d="M6 10 1.5 14.5" stroke="#e2e2e2" strokeWidth="1.2" />
            <path d="M10 1.5 14.5 6l-2 .8-3 3.7v2l-6-6h2l3.7-3Z" fill="#e2e2e2" stroke="#222" strokeWidth=".7" />
          </svg>
          <div className="ml-[1px]">
            <SceneIc />
          </div>
          <span className="text-[#111]">Scene</span>
        </div>
        <PSep />
        <PHead open label="Render" />
        <div className={`${group} mt-2 h-[19px] rounded-[4px]`}>
          <div className={`${light} flex w-[67px] items-center gap-[5px] pl-[3px]`}>
            <RenderCamIc star />
            <span>Render</span>
          </div>
          <div className={`${light} flex w-[68px] items-center gap-[1px] border-l border-[#232323] pl-[3px]`}>
            <svg width="14" height="16" viewBox="0 0 16 16" className="shrink-0">
              <rect x="1" y="6" width="14" height="9" fill="#3a3a3a" stroke="#ddd" strokeWidth=".7" />
              <path d="M1 5 13 1v4Z" fill="#e8e8e8" stroke="#222" strokeWidth=".5" />
            </svg>
            <span>Animatio</span>
          </div>
          <div className={`${light} flex flex-1 items-center gap-[9px] border-l border-[#232323] pl-[3px]`}>
            <svg width="16" height="16" viewBox="0 0 16 16" className="shrink-0">
              <path d="M2 6h3l3-3v10l-3-3H2Z" fill="#ddd" stroke="#333" strokeWidth=".6" />
              <path d="M10 5c1.5 2 1.5 4 0 6M12.5 3.5c2.5 3 2.5 6 0 9" stroke="#8cb2e8" fill="none" />
            </svg>
            <span>Audio</span>
          </div>
        </div>
        <div className="mt-[6px] flex h-[20px] items-center">
          <span className="w-[73px] pl-[7px] text-[#111]">Display:</span>
          <div className={`${group} h-[20px] flex-1 rounded-[4px]`}>
            <div className={`${dark} flex w-[113px] items-center pl-[8px] pr-[4px]`}>
              <span>Image Editor</span>
              <Arrows />
            </div>
            <Cell className={`flex-1 ${light}`}>
              <svg width="16" height="16" viewBox="0 0 16 16">
                <path d="M3 7V4a2.5 2.5 0 0 1 5 0" fill="none" stroke="#eee" strokeWidth="1.3" />
                <rect x="4" y="7" width="10" height="7" fill="#e5e5e5" stroke="#222" strokeWidth=".6" />
              </svg>
            </Cell>
          </div>
        </div>
        <Sep className="mt-2 -ml-[3px] w-[212px]" />
        <PHead open label="Dimensions" />
        <div className={`${group} mt-[7px] h-[20px] rounded-[4px]`}>
          <div className={`${dark} flex w-[165px] items-center pl-[7px] pr-[4px]`}>
            <span>Render Presets</span>
            <Arrows />
          </div>
          <Cell className={`flex-1 border-l border-[#232323] ${light}`}>
            <PlusIc />
          </Cell>
          <Cell className={`w-[20px] border-l border-[#232323] ${light}`}>
            <svg width="16" height="16" viewBox="0 0 16 16">
              <rect x="2.5" y="7" width="11" height="2.4" fill="#f0f0f0" stroke="#222" strokeWidth=".6" />
            </svg>
          </Cell>
        </div>
        <div className="mt-[7px] flex h-[167px] gap-[9px]">
          <div className="w-[98px]">
            <PLabel>Resolution:</PLabel>
            <div className={`${group} flex-col rounded-[9px]`}>
              <NumCol rows={[["X:", "1920 px"], ["Y:", "1080 px"]]} />
              <div className={`${num} flex h-[20px] items-center border-t border-[#232323] pr-[6px]`}>
                <div className="h-full w-[52px] bg-linear-to-b from-[#5f5f5f] to-[#777777]" />
                <span className="ml-auto">50%</span>
              </div>
            </div>
            <PLabel>Aspect Ratio:</PLabel>
            <div className={`${group} flex-col rounded-[9px]`}>
              <NumCol rows={[["X:", "1.000"], ["Y:", "1.000"]]} />
            </div>
            <div className="mt-[3px] flex">
              <CheckLabel label="Bo" w="w-[53px]" />
              <CheckLabel label="Cro" dim w="w-[45px]" />
            </div>
          </div>
          <div className="w-[99px]">
            <PLabel right>Frame Range:</PLabel>
            <div className={`${group} flex-col rounded-[9px]`}>
              <NumCol rows={[["Start Fram:", "1"], ["End Fra:", "250"], ["Frame Ste:", "1"]]} />
            </div>
            <PLabel right>Frame Rate:</PLabel>
            <div className={`${dark} flex h-[20px] items-center rounded-[4px] pl-[8px] pr-[4px] outline outline-[#232323] -outline-offset-1`}>
              <span>24 fps</span>
              <Arrows />
            </div>
            <div className="mt-[2px]">
              <PLabel right>Time Remapping:</PLabel>
            </div>
            <div className={`${group} mt-px h-[20px] rounded-full`}>
              <NumPill value="10" w="w-[48px]" />
              <div className="flex-1 border-l border-[#232323]">
                <NumPill value="100" w="w-full" />
              </div>
            </div>
          </div>
        </div>
        <PSep />
        <PHead open check checked label="Anti-Aliasing" />
        <div className="mt-2 flex gap-[9px]">
          <div className={`${group} h-[20px] w-[98px] rounded-[4px]`}>
            <Cell className={`w-[23px] ${dark}`}>5</Cell>
            <Cell className={`w-[24px] border-l border-[#232323] ${blue}`}>8</Cell>
            <Cell className={`w-[24px] border-l border-[#232323] ${dark}`}>11</Cell>
            <Cell className={`flex-1 border-l border-[#232323] ${dark}`}>16</Cell>
          </div>
          <div className={`${dark} flex h-[20px] w-[99px] items-center rounded-[4px] pl-[8px] pr-[4px] outline outline-[#232323] -outline-offset-1`}>
            <span className="whitespace-nowrap">Mitchell-Netr...</span>
            <Arrows />
          </div>
        </div>
        <div className="mt-[2px] flex gap-[9px]">
          <CheckLabel label="Full Sample" w="w-[98px]" />
          <div className={`${group} h-[20px] w-[99px] rounded-full`}>
            <NumPill label="Siz:" value="1.000 px" w="w-full" />
          </div>
        </div>
        <Sep className="mt-2 -ml-[3px] w-[212px]" />
        <PHead check label="Sampled Motion Blur" />
        <PSep />
        <PHead label="Shading" />
        <PSep />
        <PHead label="Performance" />
        <PSep />
        <PHead label="Post Processing" />
        <PSep />
        <PHead check label="Stamp" />
        <PSep />
        <div className="-mt-px">
          <PHead open label="Output" />
        </div>
        <div className={`${group} mt-2 h-[20px] rounded-[4px]`}>
          <div className={`${num} flex w-[185px] items-center pl-[7px]`}>
            <span>/tmp/</span>
          </div>
          <Cell className={`flex-1 border-l border-[#232323] ${light}`}>
            <svg width="16" height="16" viewBox="0 0 16 16">
              <rect x="6" y="1.5" width="7" height="6" fill="#f2f2f2" stroke="#333" strokeWidth=".6" />
              <path d="M2 4h4l1 2h7v8H2Z" fill="#d8c98a" stroke="#333" strokeWidth=".7" />
            </svg>
          </Cell>
        </div>
        <div className="mt-[5px] flex gap-[7px]">
          <CheckLabel on label="Overwrite" light w="w-[100px]" />
          <CheckLabel on label="File Extensi..." light w="w-[99px]" />
        </div>
        <div className="mt-[2px] flex gap-[7px]">
          <CheckLabel label="Placeholders" w="w-[100px]" />
          <CheckLabel label="Cache Result" w="w-[99px]" />
        </div>
        <div className="mt-[5px] flex gap-[9px]">
          <div className={`${dark} flex h-[20px] w-[98px] items-center gap-[4px] rounded-[4px] pl-[4px] pr-[4px] outline outline-[#232323] -outline-offset-1`}>
            <svg width="15" height="16" viewBox="0 0 15 16" className="shrink-0">
              <rect x="1" y="1" width="12" height="14" fill="#f5f5f5" />
              <rect x="3" y="3" width="8" height="5" fill="#e0a8a8" />
              <rect x="3" y="8" width="8" height="5" fill="#8878b8" />
            </svg>
            <span>PNG</span>
            <Arrows />
          </div>
          <div className={`${group} h-[20px] w-[99px] rounded-[4px]`}>
            <Cell className={`w-[32px] ${dark}`}>BW</Cell>
            <Cell className={`w-[33px] border-l border-[#232323] ${dark}`}>RGB</Cell>
            <Cell className={`flex-1 border-l border-[#232323] ${blue}`}>RGBA</Cell>
          </div>
        </div>
        <div className="mt-[2px] flex h-[20px] items-center">
          <span className="w-[75px] pl-[7px] text-[#111]">Color Dep...</span>
          <div className={`${group} h-[20px] flex-1 rounded-[4px]`}>
            <Cell className={`w-[65px] ${blue}`}>8</Cell>
            <Cell className={`flex-1 border-l border-[#232323] ${dark}`}>16</Cell>
          </div>
        </div>
        <div className={`${group} mt-[2px] h-[20px] items-stretch rounded-full ${num}`}>
          <div className="relative flex w-full items-center">
            <div className="h-full w-[38px] bg-linear-to-b from-[#5f5f5f] to-[#777777]" />
            <span className="absolute left-[14px]">Compression:</span>
            <span className="ml-auto mr-[15px]">15%</span>
          </div>
        </div>
        <Sep className="mt-[10px] -ml-[3px] w-[212px]" />
        <PHead label="Bake" />
        <PSep />
        <PHead check label="Freestyle" />
      </div>
      <Hatch className="absolute right-0 top-0" />
      <Hatch className="absolute bottom-0 left-0" />
    </div>
  );
}

export default function App() {
  return (
    <div className="h-[1135px] overflow-hidden bg-white pl-[56px] pt-[32px] font-['DejaVu_Sans',sans-serif] text-[10px] [&_span]:translate-y-px">
      <div className="flex h-[1023px] w-[1680px] flex-col overflow-hidden rounded-b-[3px] rounded-t-[5px] shadow-[0_22px_70px_4px_rgba(0,0,0,0.56)]">
        <div className="relative flex h-[21px] shrink-0 items-center justify-center border-t border-[#f2f2f2] bg-linear-to-b from-[#ebebeb] to-[#d3d3d3] font-['Liberation_Sans',sans-serif] text-[13px] text-[#4a4a4a]">
          <span>Blender</span>
          <div className="absolute left-[8px] top-[5px] flex gap-[8px]">
            <div className="flex h-[12px] w-[12px] items-center justify-center rounded-full bg-[#fc5753]">
              <div className="h-[4px] w-[4px] rounded-full bg-[#7e0508]" />
            </div>
            <div className="h-[12px] w-[12px] rounded-full bg-[#fdbc40]" />
            <div className="h-[12px] w-[12px] rounded-full bg-[#33c748]" />
          </div>
        </div>
        <div className="relative flex h-[28px] shrink-0 items-center border-b border-[#0a0a0a] bg-[#6f6f6f] pl-[8px] pt-[3px]">
          <Selector>
            <InfoIc />
          </Selector>
          <div className="ml-[13px] flex">
            <Menu w="w-[37px]">File</Menu>
            <Menu w="w-[56px]">Render</Menu>
            <Menu w="w-[59px]">Window</Menu>
            <Menu w="w-[36px]">Help</Menu>
          </div>
          <div className={`${group} h-[20px] w-[192px] shrink-0 rounded-[4px]`}>
            <div className={`${dark} flex w-[32px] items-center justify-center gap-[2px]`}>
              <svg width="14" height="14" viewBox="0 0 14 14">
                <path d="M1 1h5v12H1ZM8 1h5v5H8ZM8 8h5v5H8Z" fill="#f0f0f0" />
              </svg>
              <UpDown />
            </div>
            <div className={`${num} flex w-[120px] items-center pl-[7px]`}>
              <span>Default</span>
            </div>
            <Cell className={`w-[20px] border-l border-[#232323] ${light}`}>
              <PlusIc />
            </Cell>
            <Cell className={`flex-1 border-l border-[#232323] ${light}`}>
              <CrossIc />
            </Cell>
          </div>
          <div className={`${group} ml-[5px] h-[20px] w-[191px] shrink-0 rounded-[4px]`}>
            <div className={`${dark} flex w-[32px] items-center justify-center gap-[1px]`}>
              <SceneIc />
              <UpDown />
            </div>
            <div className={`${num} flex w-[119px] items-center pl-[7px]`}>
              <span>Scene</span>
            </div>
            <Cell className={`w-[20px] border-l border-[#232323] ${light}`}>
              <PlusIc />
            </Cell>
            <Cell className={`flex-1 border-l border-[#232323] ${light}`}>
              <CrossIc />
            </Cell>
          </div>
          <div className={`${dark} ml-[17px] flex h-[20px] w-[110px] shrink-0 items-center rounded-[4px] pl-[8px] pr-[4px] outline outline-[#232323] -outline-offset-1`}>
            <span>Blender Render</span>
            <Arrows />
          </div>
          <div className="ml-[19px]">
            <BlenderLogo />
          </div>
          <span className="ml-[10px] whitespace-nowrap tracking-[0.09px] text-[#111]">v2.73 | Verts:33/33 | Edges:64/64 | Faces:33/33 | Tris:62 | Mem:12.93M | Cone</span>
          <Hatch className="absolute bottom-0 left-0" />
        </div>
        <div className="flex flex-1">
          <div className="flex w-[1458px] shrink-0 flex-col">
            <div className="flex h-[855px] shrink-0">
              <ToolShelf />
              <div className="w-[3px] shrink-0 border-l border-[#8d8d8d] bg-[#5c5c5c]" />
              <div className="relative w-[1298px] shrink-0 bg-[#393939]">
                <Scene3D />
                <span className="absolute left-[19px] top-[10px] text-[#f0f0f0]">User Persp</span>
                <span className="absolute bottom-[7px] left-[70px] text-[#f0f0f0]">(1) Cone</span>
                <span className="absolute right-[3px] top-[22px] flex h-[14px] w-[13px] items-center justify-center rounded-[3px] bg-[#4c4c4c] text-[10px] leading-none text-[#bbb]">+</span>
                <Hatch className="absolute right-0 top-0" />
              </div>
            </div>
            <ViewHeader />
            <Timeline />
            <Scrubber />
            <TimeHeader />
          </div>
          <div className="flex w-[222px] shrink-0 flex-col border-l border-[#151515]">
            <Outliner />
            <Properties />
          </div>
        </div>
      </div>
    </div>
  );
}
